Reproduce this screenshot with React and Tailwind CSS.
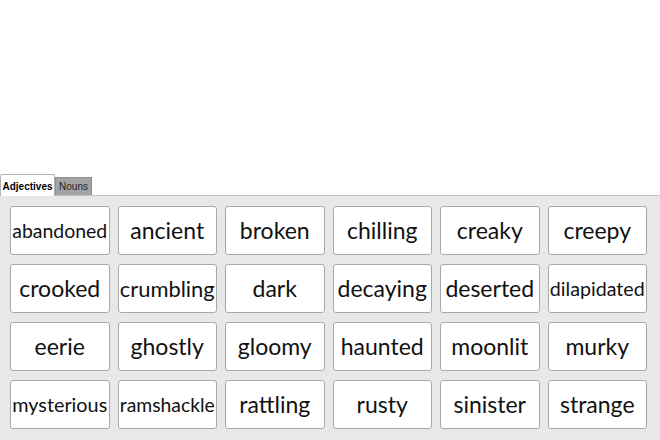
import React, { useLayoutEffect, useRef, useState } from "react";

const words = [
  "abandoned", "ancient", "broken", "chilling", "creaky", "creepy",
  "crooked", "crumbling", "dark", "decaying", "deserted", "dilapidated",
  "eerie", "ghostly", "gloomy", "haunted", "moonlit", "murky",
  "mysterious", "ramshackle", "rattling", "rusty", "sinister", "strange",
];

function Card({ w }) {
  const ref = useRef(null);
  const [size, setSize] = useState(23);
  useLayoutEffect(() => {
    const el = ref.current;
    if (!el) return;
    const width = el.getBoundingClientRect().width;
    if (width > 95) setSize((s) => (s * 95) / width);
  }, []);
  return (
    <div className="h-[49px] bg-white border border-[#a9a9a9] rounded-[3px] flex items-center justify-center text-[#111] font-['Lato',sans-serif] leading-none whitespace-nowrap overflow-hidden">
      <span ref={ref} style={{ fontSize: `${size}px` }}>
        {w}
      </span>
    </div>
  );
}

export default function App() {
  return (
    <div className="w-[660px] h-[440px] bg-white overflow-hidden flex flex-col">
      <div className="h-[174px] shrink-0 bg-white" />
      <div className="flex items-end h-[22px] shrink-0 border-b border-[#c4c4c4] font-['Liberation_Sans',sans-serif] text-[10px] text-black">
        <div className="w-[55px] h-[22px] -mb-px bg-white border border-b-0 border-[#b4b4b4] rounded-t-[2px] flex items-center justify-center font-bold pt-px">
          Adjectives
        </div>
        <div className="w-[37px] h-[18px] bg-[#a3a3a3] border border-b-0 border-[#8f8f8f] flex items-center justify-center text-[#222]">
          Nouns
        </div>
      </div>
      <div className="flex-1 bg-[#e8e8e8] pl-[10px] pr-[13px] pt-[10px]">
        <div className="grid grid-cols-6 gap-x-[8px] gap-y-[9px]">
          {words.map((w) => (
            <Card key={w} w={w} />
          ))}
        </div>
      </div>
    </div>
  );
}
